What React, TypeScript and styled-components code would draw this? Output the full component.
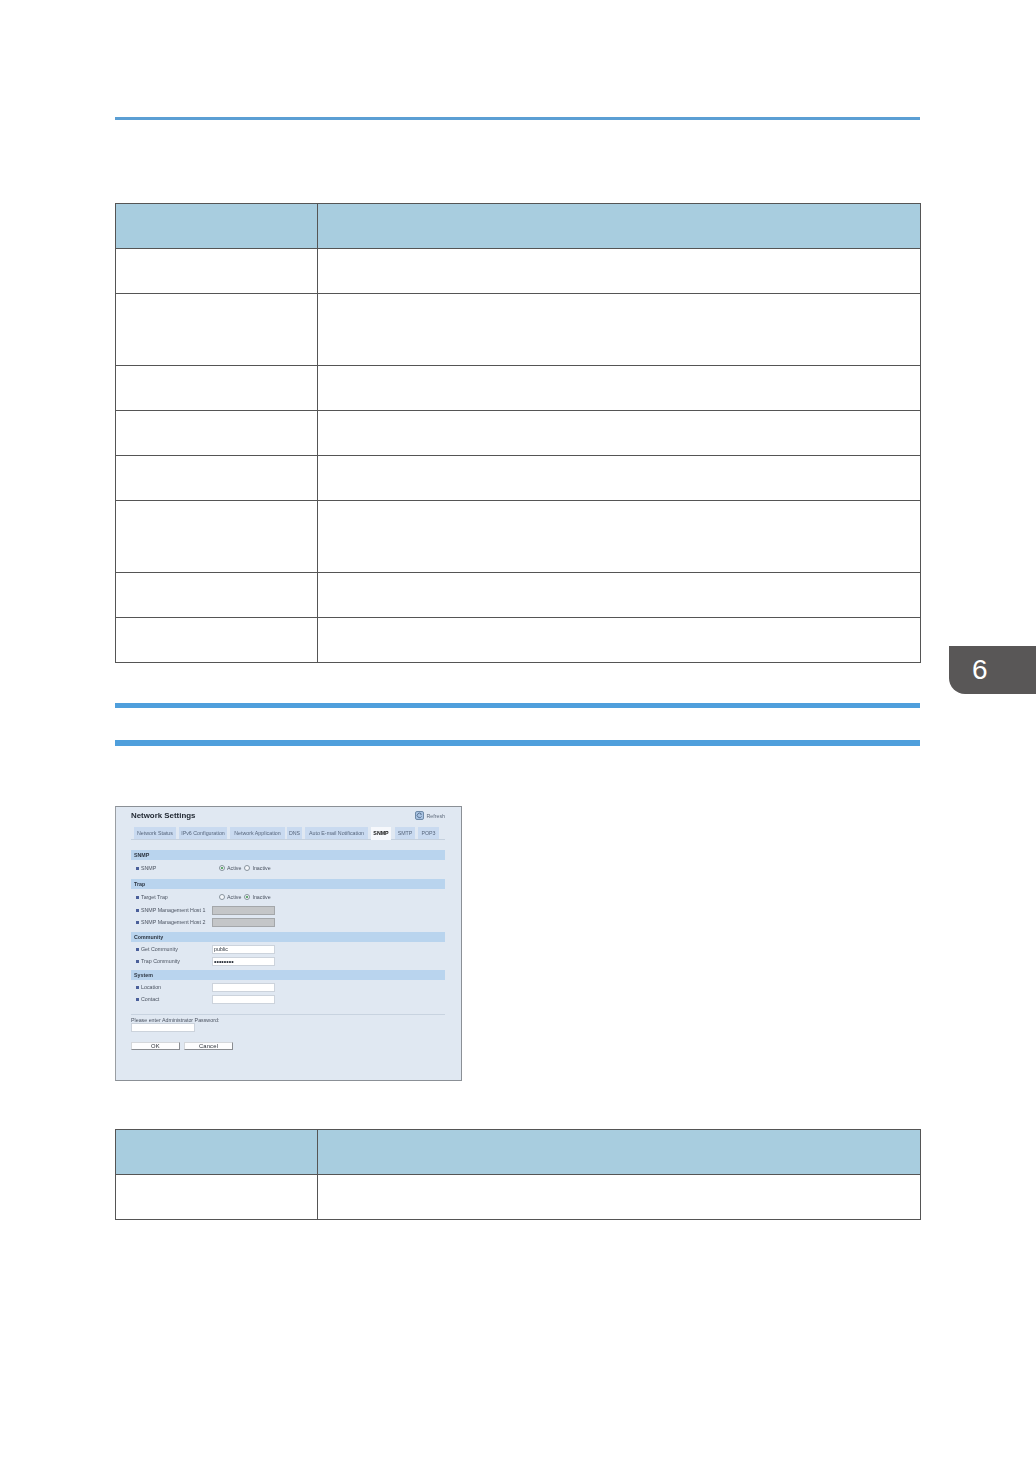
import React from "react";
import styled, { createGlobalStyle } from "styled-components";

const Global = createGlobalStyle`
  html, body { margin: 0; padding: 0; background: #fff; }
  body { font-family: "Liberation Sans", Arial, sans-serif; }
`;

const Page = styled.div`
  position: relative;
  width: 1036px;
  height: 1470px;
  padding: 117px 115px 0;
  box-sizing: border-box;
  overflow: hidden;
  background: #fff;
`;

const Rule = styled.div<{ $h: number; $top: number }>`
  width: 805px;
  height: ${(p) => p.$h}px;
  margin-top: ${(p) => p.$top}px;
  background: ${(p) => (p.$h === 3 ? "#5b9fd4" : "#4f9fdc")};
`;

const Table = styled.table<{ $top: number }>`
  border-collapse: collapse;
  table-layout: fixed;
  width: 806px;
  margin-top: ${(p) => p.$top}px;
  col:first-child { width: 202px; }
`;

const Row = styled.tr<{ $h: number }>`
  height: ${(p) => p.$h}px;
`;

const Head = styled.th`
  background: #a8cddf;
  border: 1px solid #555;
  padding: 0;
`;

const Cell = styled.td`
  border: 1px solid #555;
  padding: 0;
`;

const ChapterTab = styled.div`
  position: absolute;
  left: 949px;
  top: 646px;
  width: 87px;
  height: 48px;
  box-sizing: border-box;
  padding: 6px 0 0 23px;
  background: #595757;
  border-bottom-left-radius: 16px;
  color: #fff;
  font-size: 28px;
  line-height: 36px;
  font-family: "Liberation Sans", sans-serif;
`;

const Shot = styled.div`
  width: 347px;
  height: 275px;
  margin-top: 60px;
  box-sizing: border-box;
  padding: 4px 16px 0 15px;
  background: #e0e8f2;
  border: 1px solid #8b9096;
  border-left-color: #9a9ea3;
  color: #4a5260;
  font-size: 5.3px;
  line-height: 12px;
`;

const Inner = styled.div`
  filter: blur(0.35px);
`;

const ShotHeader = styled.div`
  display: flex;
  justify-content: space-between;
  align-items: center;
  height: 9px;
`;

const Title = styled.div`
  font-size: 7.9px;
  font-weight: bold;
  color: #1f2630;
`;

const Refresh = styled.div`
  display: flex;
  align-items: center;
  gap: 2px;
  color: #5f6b7c;
  font-size: 5.3px;
`;

const Tabs = styled.div`
  display: flex;
  height: 12px;
  margin-top: 7px;
  padding-left: 3px;
  border-bottom: 1px solid #c4d0de;
`;

const TabItem = styled.div<{ $w: number; $gap: number; $active?: boolean }>`
  width: ${(p) => p.$w}px;
  height: 12px;
  margin-left: ${(p) => p.$gap}px;
  text-align: center;
  white-space: nowrap;
  line-height: 12px;
  font-size: 5.3px;
  color: ${(p) => (p.$active ? "#111" : "#57667c")};
  font-weight: ${(p) => (p.$active ? "bold" : "normal")};
  background: ${(p) => (p.$active ? "#f6f8fc" : "#c9daf0")};
  border-bottom: 1px solid ${(p) => (p.$active ? "#f6f8fc" : "#c4d0de")};
`;

const SectionBar = styled.div<{ $top: number }>`
  height: 10px;
  margin-top: ${(p) => p.$top}px;
  padding-left: 3px;
  background: #b9d4ee;
  color: #2c3542;
  font-size: 5.3px;
  font-weight: bold;
  line-height: 10px;
`;

const Fields = styled.div<{ $top: number }>`
  display: flex;
  flex-direction: column;
  margin-top: ${(p) => p.$top}px;
`;

const Field = styled.div<{ $top?: number }>`
  display: grid;
  grid-template-columns: 81px 63px;
  height: 12px;
  margin-top: ${(p) => p.$top ?? 0}px;
  align-items: center;
`;

const Label = styled.div`
  display: flex;
  align-items: center;
  gap: 2px;
  padding-left: 5px;
  white-space: nowrap;
`;

const Marker = styled.span`
  width: 3px;
  height: 3px;
  background: #4a5f9a;
`;

const Radios = styled.div`
  display: flex;
  align-items: center;
  padding-left: 7px;
  white-space: nowrap;
`;

const Radio = styled.span<{ $on?: boolean }>`
  display: inline-block;
  box-sizing: border-box;
  width: 6px;
  height: 6px;
  margin-right: 2px;
  border-radius: 50%;
  border: 1px solid #87929c;
  background: ${(p) => (p.$on ? "radial-gradient(circle, #62a870 0 1.2px, #f4f7fb 1.6px)" : "#f4f7fb")};
`;

const RadioText = styled.span`
  margin-right: 3px;
`;

const Input = styled.div<{ $disabled?: boolean; $w?: number; $bold?: boolean }>`
  box-sizing: border-box;
  width: ${(p) => p.$w ?? 63}px;
  height: 9px;
  padding-left: 1px;
  background: ${(p) => (p.$disabled ? "#c4c6c8" : "#fff")};
  border: 1px solid ${(p) => (p.$disabled ? "#a4a7aa" : "#ccd3dc")};
  font-size: ${(p) => (p.$bold ? 7 : 5.3)}px;
  font-weight: ${(p) => (p.$bold ? "bold" : "normal")};
  color: #2c333d;
  line-height: 7px;
  overflow: hidden;
`;

const Divider = styled.div`
  height: 1px;
  margin-top: 9px;
  background: #c8d3e0;
`;

const Prompt = styled.div`
  height: 7px;
  margin-top: 1px;
  line-height: 8px;
  white-space: nowrap;
`;

const Buttons = styled.div`
  display: flex;
  gap: 4px;
  margin-top: 10px;
`;

const Btn = styled.div`
  box-sizing: border-box;
  width: 49px;
  height: 8px;
  background: #fdfdfe;
  border: 1px solid #d4d7db;
  border-right-color: #8a8d92;
  border-bottom-color: #8a8d92;
  color: #2a2f36;
  text-align: center;
  font-size: 5.8px;
  letter-spacing: 0.2px;
  line-height: 6px;
`;

const RefreshIcon = () => (
  <svg width="9" height="9" viewBox="0 0 9 9">
    <rect x="0.5" y="0.5" width="8" height="8" rx="1.5" fill="#a9c3e2" stroke="#6f8aa8" />
    <path d="M6.5 3.2A2.3 2.3 0 1 0 6.6 5.4" fill="none" stroke="#4d6685" strokeWidth="0.8" />
    <path d="M5.6 2.2l1.2 1.2-1.5.4z" fill="#4d6685" />
  </svg>
);

const tabs = [
  { t: "Network Status", w: 42, g: 0 },
  { t: "IPv6 Configuration", w: 48, g: 3 },
  { t: "Network Application", w: 55, g: 3 },
  { t: "DNS", w: 15, g: 2 },
  { t: "Auto E-mail Notification", w: 63, g: 3 },
  { t: "SNMP", w: 20, g: 3, active: true },
  { t: "SMTP", w: 20, g: 4 },
  { t: "POP3", w: 21, g: 3 },
];

const Widths = () => (
  <colgroup>
    <col />
    <col />
  </colgroup>
);

const rowHeights = [45, 72, 45, 45, 45, 72, 45, 45];

export default function App() {
  return (
    <Page>
      <Global />
      <Rule $h={3} $top={0} />
      <Table $top={83}>
        <Widths />
        <tbody>
          <Row $h={45}>
            <Head />
            <Head />
          </Row>
          {rowHeights.map((h, i) => (
            <Row key={i} $h={h}>
              <Cell />
              <Cell />
            </Row>
          ))}
        </tbody>
      </Table>
      <Rule $h={5} $top={40} />
      <Rule $h={6} $top={32} />
      <Shot>
        <Inner>
          <ShotHeader>
            <Title>Network Settings</Title>
            <Refresh>
              <RefreshIcon />
              Refresh
            </Refresh>
          </ShotHeader>
          <Tabs>
            {tabs.map((t) => (
              <TabItem key={t.t} $w={t.w} $gap={t.g} $active={t.active}>
                {t.t}
              </TabItem>
            ))}
          </Tabs>
          <SectionBar $top={10}>SNMP</SectionBar>
          <Fields $top={2}>
            <Field>
              <Label><Marker />SNMP</Label>
              <Radios>
                <Radio $on /><RadioText>Active</RadioText>
                <Radio /><RadioText>Inactive</RadioText>
              </Radios>
            </Field>
          </Fields>
          <SectionBar $top={5}>Trap</SectionBar>
          <Fields $top={2}>
            <Field>
              <Label><Marker />Target Trap</Label>
              <Radios>
                <Radio /><RadioText>Active</RadioText>
                <Radio $on /><RadioText>Inactive</RadioText>
              </Radios>
            </Field>
            <Field $top={1}>
              <Label><Marker />SNMP Management Host 1</Label>
              <Input $disabled />
            </Field>
            <Field>
              <Label><Marker />SNMP Management Host 2</Label>
              <Input $disabled />
            </Field>
          </Fields>
          <SectionBar $top={4}>Community</SectionBar>
          <Fields $top={1}>
            <Field>
              <Label><Marker />Get Community</Label>
              <Input>public</Input>
            </Field>
            <Field>
              <Label><Marker />Trap Community</Label>
              <Input $bold>••••••••</Input>
            </Field>
          </Fields>
          <SectionBar $top={3}>System</SectionBar>
          <Fields $top={1}>
            <Field>
              <Label><Marker />Location</Label>
              <Input />
            </Field>
            <Field>
              <Label><Marker />Contact</Label>
              <Input />
            </Field>
          </Fields>
          <Divider />
          <Prompt>Please enter Administrator Password:</Prompt>
          <Input $w={64} />
          <Buttons>
            <Btn>OK</Btn>
            <Btn>Cancel</Btn>
          </Buttons>
        </Inner>
      </Shot>
      <Table $top={48}>
        <Widths />
        <tbody>
          <Row $h={45}>
            <Head />
            <Head />
          </Row>
          <Row $h={45}>
            <Cell />
            <Cell />
          </Row>
        </tbody>
      </Table>
      <ChapterTab>6</ChapterTab>
    </Page>
  );
}
